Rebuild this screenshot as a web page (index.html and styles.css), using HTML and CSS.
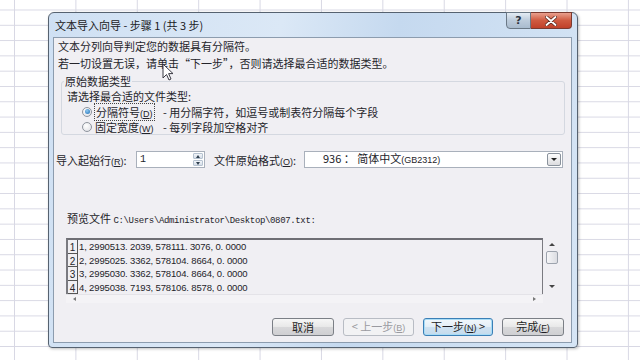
FILE: index.html
```html
<!DOCTYPE html>
<html lang="zh-CN">
<head>
  <meta charset="UTF-8" />
  <title>文本导入向导</title>
  <link rel="stylesheet" href="styles.css">
</head>
<body>
  <div class="dialog">
    <div class="titlebar">
      <span class="title">文本导入向导 - 步骤 1 (共 3 步)</span>
      <div class="caption">
        <span class="cap-help">?</span>
        <span class="cap-close">
          <svg width="12" height="10" viewBox="0 0 12 10"><path d="M1.5 1 L10.5 9 M10.5 1 L1.5 9" stroke="#5a2a20" stroke-width="3.4" stroke-linecap="round"/><path d="M1.5 1 L10.5 9 M10.5 1 L1.5 9" stroke="#fff" stroke-width="1.8" stroke-linecap="round"/></svg>
        </span>
      </div>
    </div>

    <div class="client">
      <p class="line">文本分列向导判定您的数据具有分隔符。</p>
      <p class="line">若一切设置无误，请单击“下一步”，否则请选择最合适的数据类型。</p>

      <fieldset class="group">
        <legend>原始数据类型</legend>
        <div class="hint">请选择最合适的文件类型:</div>
        <div class="radio-row">
          <span class="radio checked"></span>
          <span class="radio-label"><span class="focus">分隔符号<span class="key">(<u>D</u>)</span></span></span>
          <span class="desc">- 用分隔字符，如逗号或制表符分隔每个字段</span>
        </div>
        <div class="radio-row">
          <span class="radio"></span>
          <span class="radio-label">固定宽度<span class="key">(<u>W</u>)</span></span>
          <span class="desc">- 每列字段加空格对齐</span>
        </div>
      </fieldset>

      <div class="opts">
        <span class="opt-label first">导入起始行<span class="key">(<u>R</u>)</span>:</span>
        <div class="spin">
          <span class="spin-val">1</span>
          <span class="spin-btns">
            <span class="spin-up"></span>
            <span class="spin-down"></span>
          </span>
        </div>
        <span class="opt-label second">文件原始格式<span class="key">(<u>O</u>)</span>:</span>
        <div class="combo">
          <span class="combo-val">936 ： 简体中文<span class="key">(GB2312)</span></span>
          <span class="combo-btn"></span>
        </div>
      </div>

      <div class="preview-label">预览文件 <span class="mono">C:\Users\Administrator\Desktop\0807.txt:</span></div>

      <div class="preview">
        <div class="preview-main">
          <div class="rows">
            <div class="row"><span class="num">1</span><span class="data">1, 2990513. 2039, 578111. 3076, 0. 0000</span></div>
            <div class="row"><span class="num">2</span><span class="data">2, 2995025. 3362, 578104. 8664, 0. 0000</span></div>
            <div class="row"><span class="num">3</span><span class="data">3, 2995030. 3362, 578104. 8664, 0. 0000</span></div>
            <div class="row"><span class="num">4</span><span class="data">4, 2995038. 7193, 578106. 8578, 0. 0000</span></div>
          </div>
          <div class="hscroll">
            <span class="arr-left"></span>
            <span class="arr-right"></span>
          </div>
        </div>
        <div class="vscroll">
          <span class="arr-up"></span>
          <span class="thumb"></span>
          <span class="arr-down"></span>
        </div>
      </div>

      <div class="buttons">
        <button class="btn">取消</button>
        <button class="btn disabled">&lt; 上一步<span class="key">(<u>B</u>)</span></button>
        <button class="btn default">下一步<span class="key">(<u>N</u>)</span> &gt;</button>
        <button class="btn">完成<span class="key">(<u>F</u>)</span></button>
      </div>
    </div>
  </div>

  <svg class="cursor" width="13" height="19" viewBox="0 0 13 19">
    <path d="M1 1 L1 15 L4.5 11.5 L7 17 L9 16 L6.6 10.6 L11 10.6 Z" fill="#fff" stroke="#3a3a44" stroke-width="1" stroke-linejoin="round"/>
  </svg>
</body>
</html>
```

FILE: styles.css
```css
* {
  box-sizing: border-box;
}

html, body {
  margin: 0;
  padding: 0;
}

body {
  width: 640px;
  height: 360px;
  overflow: hidden;
  position: relative;
  font-family: "Noto Sans CJK SC", "Noto Sans", sans-serif;
  font-size: 11px;
  color: #24242a;
  background-color: #fff;
  background-image:
    linear-gradient(to right, #d8d8e4 1px, transparent 1px),
    linear-gradient(to bottom, #d8d8e4 1px, transparent 1px);
  background-size: 61.4px 100%, 100% 15.3px;
  background-position: 14px 0, 0 9.5px;
}

/* ======== WINDOW FRAME ========= */
.dialog {
  margin: 12px 0 0 48px;
  width: 530px;
  height: 336px;
  border: 1px solid #566270;
  border-radius: 6px 6px 4px 4px;
  padding: 0 5px 4px 4px;
  display: flex;
  flex-direction: column;
  background: linear-gradient(100deg, #cfe0f3 0%, #dbe8f6 40%, #c5d9ef 60%, #d6e5f5 100%);
  box-shadow: 1px 1px 3px rgba(0, 0, 0, 0.25);
}

.titlebar {
  height: 24px;
  display: flex;
  align-items: flex-start;
  padding-left: 2px;
}

.title {
  line-height: 23px;
  padding-top: 1px;
  color: #1a1a22;
}

.caption {
  margin-left: auto;
  margin-top: -1px;
  display: flex;
}

.cap-help, .cap-close {
  height: 17px;
  display: flex;
  align-items: center;
  justify-content: center;
  border: 1px solid #6a7886;
}

.cap-help {
  width: 25px;
  border-radius: 0 0 0 4px;
  background: linear-gradient(#e4ecf5, #bccbdb 50%, #a9bbce);
  color: #2c3440;
  font-family: "DejaVu Sans", sans-serif;
  font-size: 11px;
  font-weight: bold;
}

.cap-close {
  width: 41px;
  border-left: none;
  border-radius: 0 0 4px 0;
  background: linear-gradient(#e9a08e, #cf5a40 50%, #c0412a);
  border-color: #7a3a30;
}

.client {
  flex: 1;
  background: #f0eff3;
  border: 1px solid #8c9cae;
  display: flex;
  flex-direction: column;
}

/* ======== TEXT ========= */
.line {
  margin: 0 0 0 4px;
  line-height: 17px;
}

.key {
  font-family: "Liberation Sans", sans-serif;
  font-size: 9px;
}

/* ======== GROUP ========= */
.group {
  margin: 3px 6px 0 7px;
  padding: 0 5px 0 5px;
  border: 1px solid #d4d8e0;
  border-radius: 3px;
  height: 60px;
}

.group legend {
  padding: 0 1px;
  margin-left: -3px;
  line-height: 13px;
}

.hint {
  line-height: 15px;
  margin-top: 1px;
}

.radio-row {
  display: flex;
  align-items: center;
  height: 15px;
}

.radio {
  width: 10px;
  height: 10px;
  margin-left: 15px;
  border-radius: 50%;
  border: 1px solid #8f959e;
  background: radial-gradient(circle at 40% 35%, #ffffff, #dcdde2);
  position: relative;
}

.radio.checked::after {
  content: "";
  position: absolute;
  left: 1.5px;
  top: 1.5px;
  width: 5px;
  height: 5px;
  border-radius: 50%;
  background: radial-gradient(circle at 40% 35%, #8ec8f0, #1c6cb4);
}

.radio-label {
  width: 71px;
  padding-left: 3px;
}

.focus {
  outline: 1px dotted #444;
  outline-offset: 0;
  padding: 0 1px;
}

/* ======== OPTIONS ========= */
.opts {
  display: flex;
  align-items: center;
  margin-top: 16px;
  height: 17px;
}

.opt-label.first {
  width: 82px;
  padding-left: 2px;
}

.opt-label.second {
  width: 90px;
  margin-left: 9px;
}

.spin {
  width: 69px;
  height: 17px;
  border: 1px solid #a9b0bb;
  background: #fff;
  display: flex;
}

.spin-val {
  flex: 1;
  padding-left: 3px;
  line-height: 15px;
  font-family: "Liberation Mono", monospace;
  font-size: 10px;
}

.spin-btns {
  width: 12px;
  display: flex;
  flex-direction: column;
  padding: 1px;
  gap: 1px;
}

.spin-up, .spin-down {
  flex: 1;
  position: relative;
  background: linear-gradient(#f2f5f9, #d6dee8);
  border: 1px solid #b6c2d0;
  border-radius: 1px;
}

.spin-up::after, .spin-down::after {
  content: "";
  position: absolute;
  left: 2px;
  top: 1px;
  border-left: 2.5px solid transparent;
  border-right: 2.5px solid transparent;
}

.spin-up::after {
  border-bottom: 3px solid #304050;
}

.spin-down::after {
  border-top: 3px solid #304050;
}

.combo {
  width: 259px;
  height: 17px;
  border: 1px solid #a9b0bb;
  background: #fff;
  display: flex;
  align-items: center;
}

.combo-val {
  flex: 1;
  padding-left: 18px;
  line-height: 15px;
}

.combo-btn {
  width: 14px;
  height: 13px;
  margin-right: 1px;
  border: 1px solid #8a929c;
  border-radius: 2px;
  background: linear-gradient(#fdfdfd, #dcdcdf);
  position: relative;
}

.combo-btn::after {
  content: "";
  position: absolute;
  left: 3px;
  top: 4px;
  border-left: 3px solid transparent;
  border-right: 3px solid transparent;
  border-top: 3px solid #222;
}

/* ======== PREVIEW ========= */
.preview-label {
  margin: 43px 0 0 13px;
  line-height: 15px;
}

.mono {
  font-family: "Liberation Mono", monospace;
  font-size: 9px;
  letter-spacing: -0.35px;
}

.preview {
  margin: 9px 0 0 12px;
  display: flex;
  height: 65px;
}

.preview-main {
  width: 477px;
  display: flex;
  flex-direction: column;
}

.rows {
  height: 56px;
  border-top: 2px solid #6e6e74;
  border-left: 2px solid #7a7a80;
  border-right: 1px solid #7a7a80;
  overflow: hidden;
}

.row {
  display: flex;
  height: 13.5px;
  line-height: 13.5px;
}

.num {
  width: 10px;
  border-right: 1px solid #555;
  border-bottom: 1px solid #555;
  text-align: center;
  line-height: 16px;
  font-family: "Liberation Sans", sans-serif;
  font-size: 10px;
}

.data {
  padding-left: 1px;
  font-family: "Liberation Sans", sans-serif;
  font-size: 9.5px;
  letter-spacing: -0.15px;
  white-space: pre;
}

.hscroll {
  height: 9px;
  background: #f4f3f6;
  border-top: 1px solid #e4e3e8;
  position: relative;
}

.arr-left, .arr-right {
  position: absolute;
  top: 2px;
  border-top: 2.5px solid transparent;
  border-bottom: 2.5px solid transparent;
}

.arr-left {
  left: 7px;
  border-right: 3px solid #777;
}

.arr-right {
  right: 7px;
  border-left: 3px solid #777;
}

.vscroll {
  width: 13px;
  height: 56px;
  margin-left: 2px;
  display: flex;
  flex-direction: column;
  align-items: center;
}

.arr-up, .arr-down {
  width: 0;
  height: 0;
  border-left: 3px solid transparent;
  border-right: 3px solid transparent;
}

.arr-up {
  margin-top: 5px;
  border-bottom: 3px solid #444;
}

.thumb {
  width: 12px;
  height: 13px;
  margin-top: 5px;
  border: 1px solid #9da3ad;
  border-radius: 2px;
  background: linear-gradient(to right, #f6f6f8, #dcdde2);
}

.arr-down {
  margin-top: auto;
  margin-bottom: 6px;
  border-top: 3px solid #444;
}

/* ======== BUTTONS ========= */
.buttons {
  margin-top: auto;
  padding: 0 7px 6px 0;
  display: flex;
  justify-content: flex-end;
  gap: 9px;
}

.btn {
  height: 18px;
  width: 62px;
  padding: 0;
  font-family: "Noto Sans CJK SC", "Noto Sans", sans-serif;
  font-size: 11px;
  line-height: 15px;
  color: #1e1e24;
  border: 1px solid #7b7f86;
  border-radius: 3px;
  background: linear-gradient(#f6f6f6 0%, #e8e8e8 50%, #d8d8da 51%, #cfcfd2 100%);
}

.btn.disabled {
  width: 71px;
  color: #9a9aa0;
  border-color: #b8bcc4;
  background: #f2f2f4;
}

.btn.default {
  width: 70px;
  border-color: #3b7fb6;
  box-shadow: inset 0 0 0 1px #a8dcf6;
  background: linear-gradient(#f2f8fc 0%, #e3eef7 50%, #cfe2f1 51%, #c4dbed 100%);
}

/* ======== POINTER ========= */
.cursor {
  position: absolute;
  left: 162px;
  top: 63px;
}
```
